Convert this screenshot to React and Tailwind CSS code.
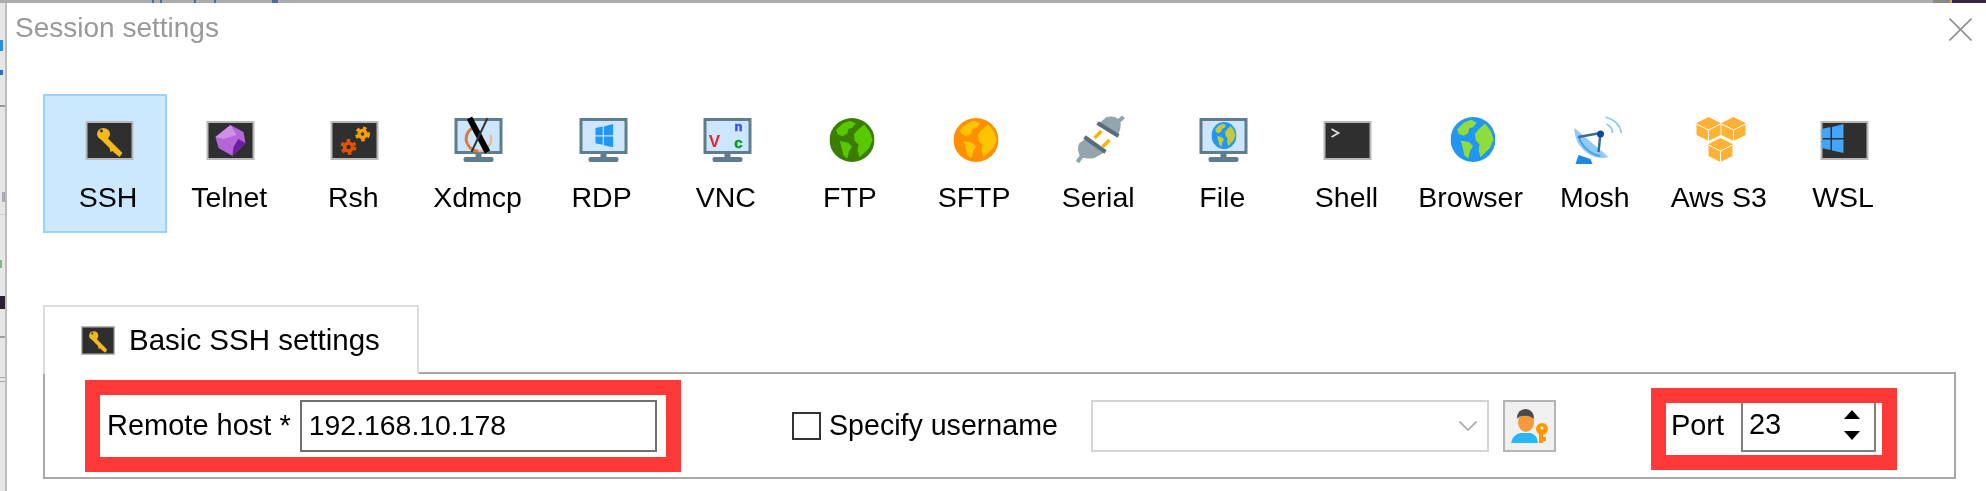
import React from 'react';

const Globe = ({ x, y, w, h, ocean, land }) => (
    <svg x={x} y={y} width={w} height={h} viewBox="0 0 48 48" preserveAspectRatio="none">
        <ellipse cx="24" cy="24" rx="24" ry="24" fill={ocean} />
        <path fill={land} d="M14 6 L22 3 L28 6 L24 11 L20 12 L19 17 L14 20 L9 18 L7 13 Z" />
        <path fill={land} d="M30 13 L37 7 L43 15 L46 24 L42 33 L36 39 L32 43 L30 35 L31 29 L27 25 L26 18 Z" />
        <path fill={land} d="M11 25 L20 27 L24 31 L21 36 L19 44 L15 41 L13 33 Z" />
    </svg>
);

const WinLogo = ({ fill }) => (
    <g fill={fill}>
        <path d="M20 15 L29 13 L29 24 L20 24 Z" />
        <path d="M30.5 13 L42 10 L42 24 L30.5 24 Z" />
        <path d="M20 25.5 L29 25.5 L29 36 L20 34 Z" />
        <path d="M30.5 25.5 L42 25.5 L42 39 L30.5 36.5 Z" />
    </g>
);

const DarkBox = ({ children }) => (
    <>
        <rect x="7" y="7" width="46" height="37" fill="#2f2f2f" stroke="#b8b8b8" strokeWidth="2" />
        {children}
    </>
);

const Monitor = ({ children }) => (
    <>
        <rect x="7.5" y="4.5" width="45" height="33" fill="#cbe6fd" stroke="#5f7d8c" strokeWidth="3" />
        <rect x="27" y="38" width="6" height="5" fill="#5f7d8c" />
        <rect x="15" y="42" width="30" height="5" rx="2" fill="#5f7d8c" />
        {children}
    </>
);

const KeyGlyph = () => (
    <g fill="#f5b91e">
        <ellipse cx="24" cy="19" rx="6.5" ry="6" />
        <path d="M26 21 L43 38 L40 42 L35 38 L33 36 L31 37 L30 33 L21 24 Z" />
        <circle cx="22" cy="16" r="1.4" fill="#2f2f2f" />
    </g>
);

const Gear = ({ cx, cy, r, color }) => (
    <g fill="none" stroke={color}>
        <circle cx={cx} cy={cy} r={r} strokeWidth="3.5" />
        <circle cx={cx} cy={cy} r={r + 2.5} strokeWidth="3" strokeDasharray="3.5 3.5" />
    </g>
);

const Cube = ({ cx, cy }) => (
    <g>
        <path fill="#ffb133" d={`M${cx} ${cy - 12} L${cx + 12} ${cy - 6} L${cx + 12} ${cy + 6} L${cx} ${cy + 12} L${cx - 12} ${cy + 6} L${cx - 12} ${cy - 6} Z`} />
        <path fill="none" stroke="#fff" strokeWidth="1" d={`M${cx - 12} ${cy - 5} L${cx} ${cy + 1} L${cx + 12} ${cy - 5} M${cx} ${cy + 1} L${cx} ${cy + 12}`} />
    </g>
);

const icons = {
    SSH: (
        <DarkBox>
            <KeyGlyph />
        </DarkBox>
    ),
    Telnet: (
        <DarkBox>
            <path fill="#b565d8" d="M30 10 L43 17 L45 28 L32 41 L18 33 L15 22 Z" />
            <path fill="#cf8fe8" d="M30 10 L36 20 L23 24 L15 22 Z" />
            <path fill="#6a1f9e" d="M45 28 L32 41 L33 32 L38 24 Z" />
        </DarkBox>
    ),
    Rsh: (
        <DarkBox>
            <Gear cx={24} cy={32} r={4} color="#e65100" />
            <Gear cx={38} cy={19} r={3.5} color="#f59f00" />
        </DarkBox>
    ),
    Xdmcp: (
        <Monitor>
            <path d="M19 29 A12 12 0 0 1 24 13" fill="none" stroke="#e07a3a" strokeWidth="3" />
            <path d="M19 29 A12 12 0 0 0 30 36" fill="none" stroke="#e07a3a" strokeWidth="3" />
            <path d="M30 36 A12 12 0 0 0 42 20" fill="none" stroke="#eeb98e" strokeWidth="2.5" />
            <path d="M21 3 L39 37" stroke="#000" strokeWidth="6" />
            <path d="M39 3 L23 37" stroke="#333" strokeWidth="2" />
        </Monitor>
    ),
    RDP: (
        <Monitor>
            <g transform="translate(6 1) scale(0.8)">
                <WinLogo fill="#2196f3" />
            </g>
        </Monitor>
    ),
    VNC: (
        <Monitor>
            <text x="17" y="32" textAnchor="middle" fontSize="17" fontWeight="700" fill="#ee2222">V</text>
            <text x="41" y="16" textAnchor="middle" fontSize="13" fontWeight="700" fill="#3d4df0" stroke="#3d4df0" strokeWidth="0.6">n</text>
            <text x="41" y="33" textAnchor="middle" fontSize="15" fontWeight="700" fill="#10a020" stroke="#10a020" strokeWidth="0.6">c</text>
        </Monitor>
    ),
    FTP: <Globe x={8} y={3} w={45} h={44} ocean="#3c7d00" land="#58c800" />,
    SFTP: <Globe x={8} y={3} w={45} h={44} ocean="#ff8f00" land="#ffc400" />,
    Serial: (
        <>
            <path d="M47 8 L54 2" stroke="#90a4ae" strokeWidth="4" />
            <path d="M13 40 L8 47" stroke="#90a4ae" strokeWidth="4" />
            <path fill="#94a5ae" d="M29 9 L37 2 Q47 0 51 7 Q52 14 48 20 Z" />
            <path fill="#94a5ae" d="M16 24 L34 38 L25 43 Q14 45 10 40 Q7 33 10 28 Z" />
            <path d="M28 8 L49 21" stroke="#566e7a" strokeWidth="4" />
            <path d="M15 22 L36 37" stroke="#566e7a" strokeWidth="4" />
            <path d="M32 16 L25 23 M40 25 L33 32" stroke="#ffb300" strokeWidth="3.5" />
        </>
    ),
    File: (
        <Monitor>
            <Globe x={18} y={7} w={25} h={27} ocean="#2196f3" land="#c6c93a" />
        </Monitor>
    ),
    Shell: (
        <DarkBox>
            <path d="M14 14 L21 18 L14 22" fill="none" stroke="#dddddd" strokeWidth="1.8" />
        </DarkBox>
    ),
    Browser: <Globe x={8} y={2} w={45} h={45} ocean="#2196f3" land="#8fdc3e" />,
    Mosh: (
        <>
            <path fill="#1e88e5" d="M12 40 L24 44 L26 49 L9 49 Z" />
            <path fill="#90caf9" d="M8 13 C7 30 24 47 42 42 Z" />
            <path fill="none" stroke="#42a5f5" strokeWidth="2" d="M12 21 C14 30 24 40 34 41" />
            <path d="M12 22 L34 18 M34 18 L32 37" stroke="#3b6d94" strokeWidth="2.5" />
            <circle cx="34" cy="19" r="3.5" fill="#0d47a1" />
            <path fill="none" stroke="#90caf9" strokeWidth="1.8" d="M40 9 Q46 12 46 18 M39 2 Q53 6 55 18" />
        </>
    ),
    'Aws S3': (
        <>
            <Cube cx={18} cy={14} />
            <Cube cx={43} cy={14} />
            <Cube cx={30} cy={35} />
        </>
    ),
    WSL: (
        <DarkBox>
            <g transform="translate(-13 -1)">
                <WinLogo fill="#42a5f5" />
            </g>
        </DarkBox>
    ),
};

const tools = Object.keys(icons);

const ToolItem = ({ name, active }) => (
    <div
        className={`w-[124.15px] h-[139px] shrink-0 box-border flex flex-col items-center pt-[21px] ${
            active ? 'bg-[#cce8ff] border-2 border-[#99d1ff] pl-[6px]' : ''
        }`}
    >
        <svg width="60" height="50" viewBox="-1.5 0 60 50" className={active ? '-mt-[2px]' : ''}>
            {icons[name]}
        </svg>
        <span className="mt-[15px] leading-[34px] whitespace-nowrap text-[28.5px]">{name}</span>
    </div>
);

const UserKeyIcon = () => (
    <svg width="49" height="48" viewBox="0 0 49 48">
        <path fill="#29b6f6" d="M6 41 Q8 32 16 31 L26 31 Q32 33 33 41 Z" />
        <ellipse cx="21" cy="20" rx="8" ry="10" fill="#f59a3c" />
        <path fill="#4a4a4a" d="M12 17 Q12 7 21 7 Q29 8 29 17 Q24 13 20 14 Q15 13 12 17 Z" />
        <circle cx="37" cy="27" r="6" fill="#ff9800" />
        <path d="M36 27 L36 41 M36 37 L41 37" stroke="#ff9800" strokeWidth="4" />
        <circle cx="37" cy="26" r="1.5" fill="#f0f0f0" />
    </svg>
);

const App = () => {
    return (
        <div className="w-[1986px] h-[491px] overflow-hidden bg-white text-black text-[28px] font-['Liberation_Sans',Arial,sans-serif] blur-[0.5px] flex flex-col">
            {/* top edge of the window behind */}
            <div className="h-[3px] shrink-0 flex bg-[#acacac]">
                <div className="ml-[152px] w-[2px] bg-[#4a6aa0]" />
                <div className="ml-[6px] w-[2px] bg-[#4a6aa0]" />
                <div className="ml-[32px] w-[2px] bg-[#4a6aa0]" />
                <div className="ml-[18px] w-[2px] bg-[#4a6aa0]" />
                <div className="ml-[56px] w-[6px] bg-[#4a6aa0]" />
                <div className="flex-1" />
                <div className="w-[17px] bg-[#888888]" />
                <div className="w-[2px] bg-[#d9a860]" />
                <div className="w-[34px] bg-[#3a2540]" />
            </div>

            <div className="flex flex-1">
                {/* left edge of the window behind */}
                <div className="w-[7px] shrink-0 border-r-2 border-[#bcbcbc] bg-[#e6e6e6] flex flex-col">
                    <div className="mt-[37px] w-[3px] h-[11px] bg-[#2a8fd8]" />
                    <div className="mt-[19px] w-[3px] h-[5px] bg-[#2a6fc8]" />
                    <div className="mt-[30px] h-[2px] bg-[#9a9a9a]" />
                    <div className="mt-[85px] ml-[2px] w-[3px] h-[10px] bg-[#a8a8b8]" />
                    <div className="mt-[12px] h-[1px] bg-[#d0d0d0]" />
                    <div className="mt-[45px] w-[2px] h-[8px] bg-[#7fb87f]" />
                    <div className="mt-[28px] w-[5px] h-[13px] bg-[#2a2030]" />
                    <div className="mt-[27px] h-[2px] bg-[#a0a0a0]" />
                    <div className="mt-[39px] h-[1px] bg-[#a8a8a8]" />
                    <div className="mt-[3px] h-[1px] bg-[#a8a8a8]" />
                </div>

                <div className="flex-1 min-w-0">
                    {/* Title bar */}
                    <div className="h-[91px] flex justify-between items-start pl-[8px] pr-[14px]">
                        <span className="leading-[50px] text-[#999999]">Session settings</span>
                        <svg width="23" height="23" viewBox="0 0 23 23" className="mt-[15px]">
                            <path d="M0.5 0.5 L22.5 22.5 M22.5 0.5 L0.5 22.5" stroke="#8f8f8f" strokeWidth="1.6" />
                        </svg>
                    </div>

                    {/* Session types */}
                    <div className="flex ml-[36px]">
                        {tools.map((name) => (
                            <ToolItem key={name} name={name} active={name === 'SSH'} />
                        ))}
                    </div>

                    {/* Tab */}
                    <div className="relative z-10 ml-[36px] mt-[72px] -mb-[2px] w-[376px] h-[69px] box-border bg-white border-2 border-b-0 border-[#dcdcdc] flex items-center pl-[36px] gap-[14px]">
                        <svg width="34" height="29" viewBox="6 6 48 39" preserveAspectRatio="none">
                            <DarkBox>
                                <KeyGlyph />
                            </DarkBox>
                        </svg>
                        <span className="whitespace-nowrap text-[29.5px]">Basic SSH settings</span>
                    </div>

                    {/* Settings panel */}
                    <div className="ml-[36px] w-[1913px] h-[107px] box-border border-2 border-[#a8a8a8] flex items-center pl-[40px] text-[29px]">
                        <div className="w-[596px] h-[92px] box-border border-[15px] border-[#ff3838] flex items-center pl-[7px]">
                            <span className="whitespace-nowrap">Remote host *</span>
                            <div className="ml-[9px] w-[357px] h-[52px] box-border border-2 border-[#707070] flex items-center pl-[7px] text-[28.4px]">
                                192.168.10.178
                            </div>
                        </div>

                        <div className="ml-[111px] w-[29px] h-[28px] box-border border-2 border-[#333333]" />
                        <span className="ml-[8px] whitespace-nowrap text-[28.6px]">Specify username</span>

                        <div className="ml-[33px] w-[398px] h-[52px] box-border border-2 border-[#d4d4d4] flex items-center justify-end pr-[10px]">
                            <svg width="18" height="10" viewBox="0 0 18 10">
                                <path d="M0.5 0.5 L9 9 L17.5 0.5" fill="none" stroke="#a8a8a8" strokeWidth="1.6" />
                            </svg>
                        </div>
                        <div className="ml-[14px] w-[53px] h-[52px] box-border border-2 border-[#b4b4b4] bg-[#f0f0f0] flex items-center justify-center">
                            <UserKeyIcon />
                        </div>

                        <div className="ml-[95px] mt-[7px] w-[246px] h-[82px] box-border border-[15px] border-[#ff3838] flex items-start pl-[5px]">
                            <span className="w-[70px] leading-[44px]">Port</span>
                            <div className="w-[135px] h-[49px] box-border border-2 border-t-0 border-[#808080] flex items-center justify-between pl-[6px] pr-[14px]">
                                <span className="-mt-[4px]">23</span>
                                <div className="flex flex-col gap-[12px] -mt-[4px]">
                                    <div className="w-0 h-0 border-x-[8.5px] border-x-transparent border-b-[9px] border-b-black" />
                                    <div className="w-0 h-0 border-x-[8.5px] border-x-transparent border-t-[9px] border-t-black" />
                                </div>
                            </div>
                        </div>
                    </div>
                </div>
            </div>
        </div>
    );
};

export default App;
